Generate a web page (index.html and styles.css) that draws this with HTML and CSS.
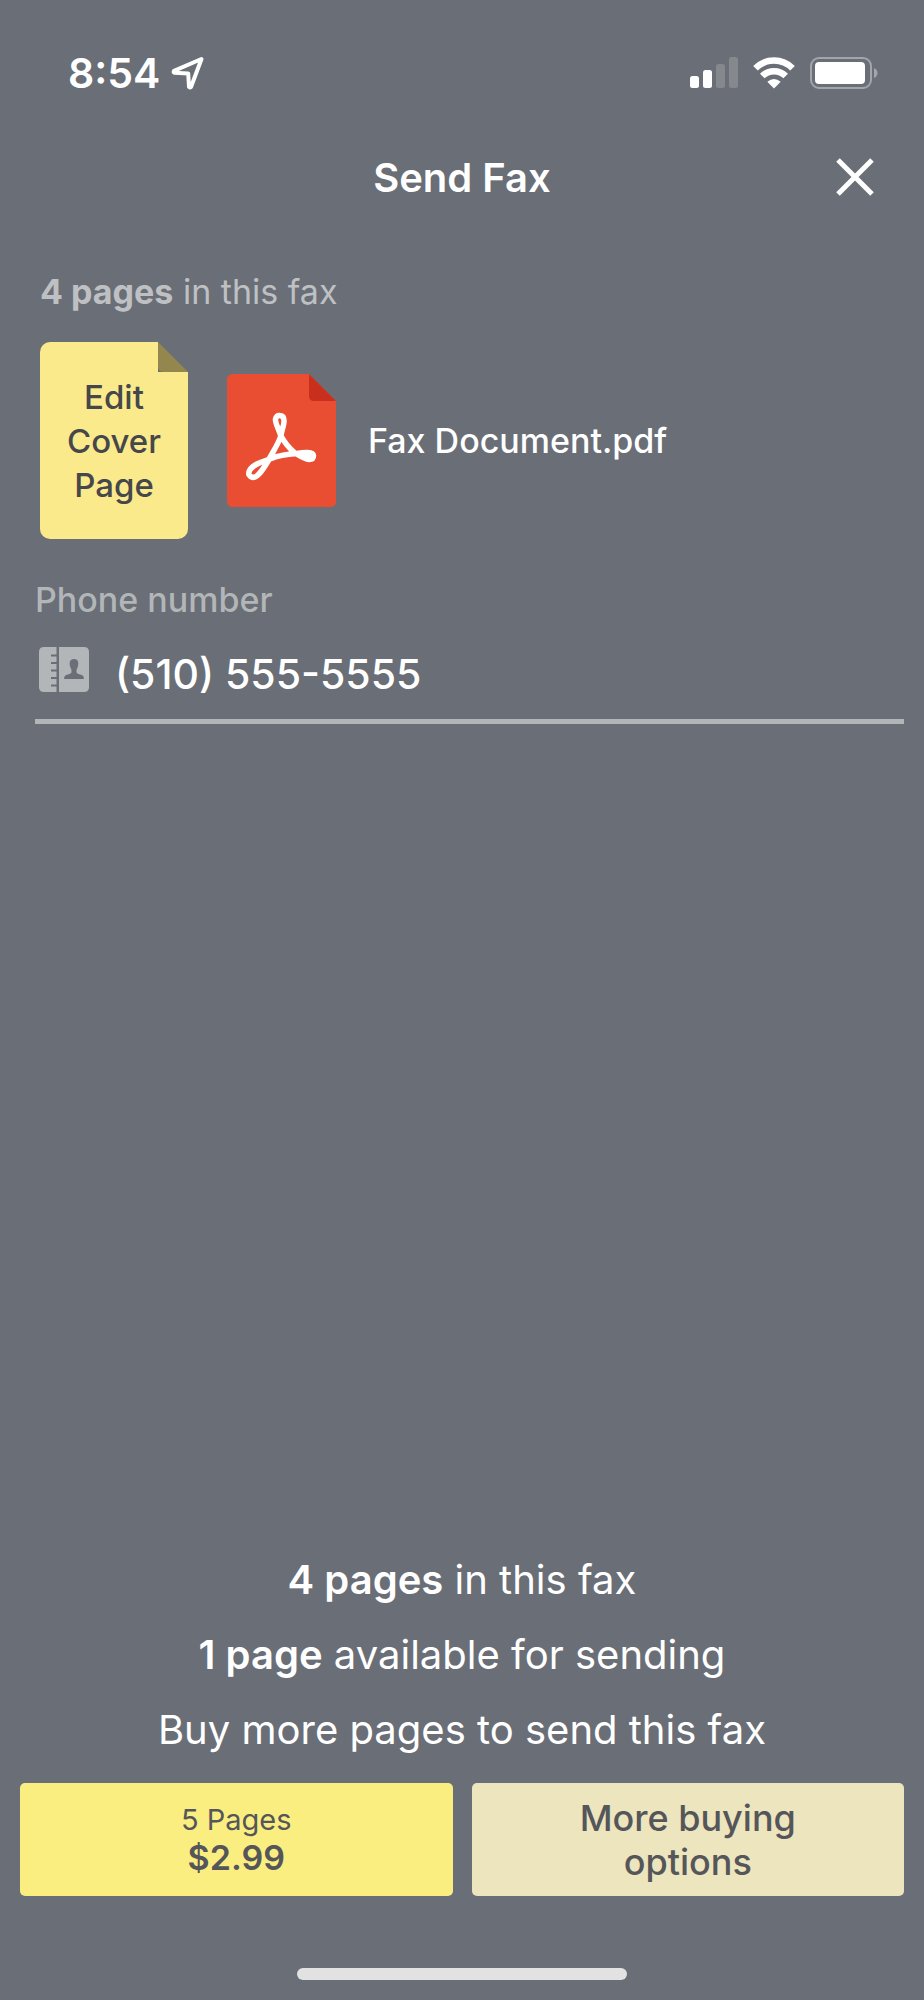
FILE: index.html
```html
<!DOCTYPE html>
<html lang="en">
<head>
    <meta charset="UTF-8">
    <meta name="viewport" content="width=device-width, initial-scale=1.0">
    <title>Send Fax</title>
    <link rel="stylesheet" href="styles.css">
</head>
<body>

    <!-- Status bar -->
    <div class="status-bar">
        <div class="status-left">
            <span class="time">8:54</span>
            <svg width="34" height="34" viewBox="0 0 34 34" aria-hidden="true">
                <path d="M30.5 3L3 14.8Q2 16.2 3.5 16.8L17.2 17.4L18 30.8Q18.8 32 20 31Z" fill="none" stroke="#fff" stroke-width="4" stroke-linejoin="round"/>
            </svg>
        </div>
        <div class="status-right">
            <svg width="48" height="32" viewBox="0 0 48 32" aria-hidden="true">
                <rect x="0" y="19" width="9" height="12" rx="2.5" fill="#fff"/>
                <rect x="13" y="13" width="9" height="18" rx="2.5" fill="#fff"/>
                <rect x="26" y="7" width="9" height="24" rx="2.5" fill="#85888c"/>
                <rect x="39" y="0" width="9" height="31" rx="2.5" fill="#85888c"/>
            </svg>
            <svg width="42" height="32" viewBox="0 0 42 32" aria-hidden="true">
                <g fill="none" stroke="#fff" stroke-width="6.5">
                    <path d="M2.5 11.3A26 26 0 0 1 39.5 11.3"/>
                    <path d="M9.3 19A16.5 16.5 0 0 1 32.7 19"/>
                </g>
                <path d="M21 31.5L14.3 24.8Q21 19.2 27.7 24.8Z" fill="#fff"/>
            </svg>
            <svg width="68" height="32" viewBox="0 0 68 32" aria-hidden="true">
                <rect x="1" y="1" width="60" height="30" rx="8" fill="none" stroke="#a2a5a9" stroke-width="2"/>
                <rect x="5" y="5" width="50" height="22" rx="4" fill="#fff"/>
                <path d="M64 11Q67.5 12.5 67.5 16T64 21Z" fill="#a2a5a9"/>
            </svg>
        </div>
    </div>

    <header class="header">
        <h1>Send Fax</h1>
        <button type="button" class="close-button" aria-label="Close">
            <svg width="38" height="38" viewBox="0 0 38 38" aria-hidden="true">
                <path d="M2 2L36 36M36 2L2 36" stroke="#fff" stroke-width="5"/>
            </svg>
        </button>
    </header>

    <main class="content">
        <p class="page-count"><strong>4 pages</strong> in this fax</p>

        <div class="files">
            <button type="button" class="cover-page">Edit Cover Page</button>
            <div class="document">
                <svg width="109" height="133" viewBox="0 0 109 133" aria-hidden="true">
                    <path d="M6 0H82L109 27V127Q109 133 103 133H6Q0 133 0 127V6Q0 0 6 0Z" fill="#e94e33"/>
                    <path d="M82 0L109 27H87Q82 27 82 22Z" fill="#c8301d"/>
                    <path d="M53.5 61C51 53 48 49 48.5 45Q49.5 41 53 41.5Q57.5 42 57 48C56.5 53 54.5 57 54 61.5C51 71 45 79 42 85.5C37 94 31 103.5 26 103.5Q20 102 22.5 96.5C26 90 36 87.5 43 85C51 81.5 61 80 70 79.5C77 78 86 77.5 86.5 81.5Q86.5 85.5 82 85.5C77 85 73 82 68 79C62 74 57 68 53.5 61Z" fill="none" stroke="#fff" stroke-width="5.5" stroke-linejoin="round"/>
                    <path d="M72 78Q86 76 87 80Q87 85 82 86Q76 84 72 81Z" fill="#fff"/>
                </svg>
                <span class="file-name">Fax Document.pdf</span>
            </div>
        </div>

        <label class="phone-label" for="phone">Phone number</label>
        <div class="phone-field">
            <svg width="50" height="53" viewBox="0 0 50 53" aria-hidden="true">
                <path d="M5 0H17.5V45H5Q0 45 0 40V5Q0 0 5 0Z" fill="#b2b6b8"/>
                <path d="M20 0H45Q50 0 50 5V40Q50 45 45 45H20Z" fill="#b2b6b8"/>
                <path d="M12 8.5H18M12 16H18M12 23.5H18M12 31H18M12 38.5H18" stroke="#6a6e76" stroke-width="2.2"/>
                <path d="M35 12C30.5 12 30 16 31.3 20Q33 23 32.5 25.5Q31.5 27 27 28Q25 29 25 32H45Q45 29 43 28Q38.5 27 37.5 25.5Q37 23 38.7 20C40 16 39.5 12 35 12Z" fill="#6a6e76"/>
            </svg>
            <input type="tel" id="phone" value="(510) 555-5555">
        </div>
    </main>

    <footer class="footer">
        <div class="summary">
            <p><strong>4 pages</strong> in this fax</p>
            <p><strong>1 page</strong> available for sending</p>
            <p>Buy more pages to send this fax</p>
        </div>
        <div class="buy-buttons">
            <button type="button" class="buy-button">
                <span class="amount">5 Pages</span>
                <strong class="price">$2.99</strong>
            </button>
            <button type="button" class="buy-button more">More buying options</button>
        </div>
        <div class="home-indicator"></div>
    </footer>

</body>
</html>
```
FILE: styles.css
```css
* {
    box-sizing: border-box;
}

body {
    font-family: Inter, "Liberation Sans", sans-serif;
    display: flex;
    flex-direction: column;
    min-height: 100vh;
    margin: 0;
    background-color: #6a6e76;
    color: #fff;
}

h1,
p {
    margin: 0;
}

button {
    font-family: inherit;
    border: none;
    cursor: pointer;
}

svg {
    display: block;
    flex-shrink: 0;
}

strong {
    font-weight: 600;
}

/* Status bar */
.status-bar {
    display: flex;
    justify-content: space-between;
    align-items: center;
    height: 146px;
    padding: 0 46px 0 68px;
}

.status-left {
    display: flex;
    align-items: center;
    gap: 11px;
}

.status-right {
    display: flex;
    align-items: center;
    gap: 15px;
}

.time {
    font-size: 41px;
    font-weight: 600;
}

/* Header */
.header {
    display: grid;
    grid-template-columns: 1fr auto 1fr;
    align-items: center;
    height: 62px;
    padding: 0 50px;
}

h1 {
    grid-column: 2;
    font-size: 40px;
    font-weight: 600;
}

.close-button {
    justify-self: end;
    padding: 0;
    background: none;
}

/* Fax contents */
.content {
    flex: 1;
    padding: 62px 20px 0 35px;
}

.page-count {
    padding-left: 5px;
    color: #bec0c3;
    font-size: 34px;
    line-height: 44px;
}

.page-count strong {
    font-weight: 700;
}

.files {
    display: flex;
    align-items: center;
    gap: 39px;
    padding: 28px 5px 39px;
}

.cover-page {
    width: 148px;
    height: 197px;
    padding: 0 20px;
    border-radius: 10px;
    background: #fbea8b;
    color: #45474b;
    font-size: 33px;
    font-weight: 500;
    line-height: 44px;
    position: relative;
}

/* folded corner */
.cover-page::before,
.cover-page::after {
    content: "";
    position: absolute;
    top: 0;
    right: 0;
    width: 30px;
    height: 30px;
    background: #6a6e76;
}

.cover-page::after {
    background: #93874d;
    border-bottom-left-radius: 5px;
    clip-path: polygon(0 0, 100% 100%, 0 100%);
}

.document {
    display: flex;
    align-items: center;
    gap: 32px;
}

.file-name {
    font-size: 34px;
    font-weight: 500;
}

.phone-label {
    display: block;
    margin-bottom: 6px;
    color: #b2b6b8;
    font-size: 34px;
    font-weight: 500;
    line-height: 44px;
}

.phone-field {
    display: flex;
    align-items: center;
    gap: 26px;
    height: 96px;
    padding-left: 4px;
    border-bottom: 5px solid #b2b6b8;
}

.phone-field input {
    flex: 1;
    min-width: 0;
    padding: 0;
    border: none;
    outline: none;
    background: none;
    color: #fff;
    font-family: inherit;
    font-size: 41px;
    font-weight: 500;
}

/* Purchase area */
.footer {
    padding: 0 20px 20px;
}

.summary {
    font-size: 40px;
    line-height: 75px;
    text-align: center;
}

.buy-buttons {
    display: grid;
    grid-template-columns: 1fr 1fr;
    gap: 19px;
    padding: 16px 0 72px;
}

.buy-button {
    display: flex;
    flex-direction: column;
    justify-content: center;
    align-items: center;
    height: 113px;
    padding: 0 80px;
    border-radius: 5px;
    background: #fbee80;
    color: #55565a;
}

.amount {
    font-size: 29px;
    line-height: 36px;
}

.price {
    font-size: 34px;
    line-height: 40px;
}

.more {
    background: #ede5bd;
    font-size: 36px;
    font-weight: 500;
    line-height: 44px;
}

.home-indicator {
    width: 330px;
    height: 12px;
    margin: 0 auto;
    border-radius: 6px;
    background: #e2e2e2;
}
```
